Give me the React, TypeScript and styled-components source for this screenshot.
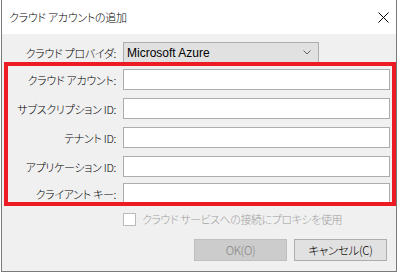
import React from "react";
import styled, { createGlobalStyle } from "styled-components";

const Global = createGlobalStyle`
  html, body { margin: 0; padding: 0; background: #ffffff; }
  body {
    font-family: "Noto Sans CJK JP", "Noto Sans", sans-serif;
    font-size: 11px;
    font-weight: 300;
    font-feature-settings: "palt";
    letter-spacing: -0.3px;
    color: #000;
  }
`;

const Win = styled.div`
  position: relative;
  margin-left: 1px;
  width: 396px;
  height: 272px;
  box-sizing: border-box;
  border: 1px solid #7a7a7a;
  border-top: none;
  background: #f0f0f0;
  display: flex;
  flex-direction: column;
  overflow: hidden;
`;

const TitleBar = styled.div`
  height: 34px;
  background: #ffffff;
  display: flex;
  align-items: center;
  justify-content: space-between;
  padding: 0 7px 0 7px;
  flex-shrink: 0;
`;

const Title = styled.span`
  font-size: 11px;
  line-height: 16px;
`;

const CloseBtn = styled.div`
  width: 12px;
  height: 12px;
  display: flex;
  align-items: center;
  justify-content: center;
`;

const Content = styled.div`
  display: flex;
  flex-direction: column;
  padding: 8px 0 0 0;
`;

const Row = styled.div<{ $mt?: number }>`
  display: grid;
  grid-template-columns: 114px 1fr;
  column-gap: 7px;
  align-items: center;
  margin-top: ${(p) => p.$mt ?? 0}px;
  padding-right: 6px;
`;

const Label = styled.label`
  text-align: right;
  white-space: nowrap;
  font-size: 11px;
  line-height: 16px;
`;

const Select = styled.div`
  width: 196px;
  height: 21px;
  box-sizing: border-box;
  border: 1px solid #adadad;
  background: #e1e1e1;
  display: flex;
  align-items: center;
  justify-content: space-between;
  padding: 0 7px 0 3px;
  font-family: "Liberation Sans", Arial, sans-serif;
  font-weight: 400;
  letter-spacing: 0;
  font-size: 12px;
`;

const Group = styled.div`
  position: relative;
  display: flex;
  flex-direction: column;
  padding-top: 6px;
`;

const Highlight = styled.div`
  position: absolute;
  left: 2px;
  right: 0px;
  top: -1px;
  height: 144px;
  border: 4px solid #ed1c24;
  box-sizing: border-box;
  pointer-events: none;
`;

const Input = styled.div`
  height: 21px;
  box-sizing: border-box;
  border: 1px solid #adadad;
  background: #ffffff;
`;

const CheckRow = styled.div`
  display: flex;
  align-items: center;
  gap: 6px;
  margin: 8px 0 0 121px;
  color: #a0a0a0;
  font-size: 11px;
  letter-spacing: -0.45px;
  line-height: 14px;
`;

const Check = styled.div`
  width: 13px;
  height: 13px;
  box-sizing: border-box;
  border: 1px solid #bcbcbc;
  background: #ffffff;
`;

const Buttons = styled.div`
  display: flex;
  justify-content: flex-end;
  gap: 7px;
  margin-top: 13px;
  padding-right: 9px;
`;

const Button = styled.div<{ $disabled?: boolean }>`
  width: 93px;
  height: 22px;
  box-sizing: border-box;
  border: 1px solid ${(p) => (p.$disabled ? "#bfbfbf" : "#adadad")};
  background: ${(p) => (p.$disabled ? "#cccccc" : "#e1e1e1")};
  color: ${(p) => (p.$disabled ? "#838383" : "#000")};
  display: flex;
  align-items: center;
  justify-content: center;
  font-size: 11.5px;
`;

const fields: { label: string; mt: number }[] = [
  { label: "クラウド アカウント:", mt: 0 },
  { label: "サブスクリプション ID:", mt: 8 },
  { label: "テナント ID:", mt: 8 },
  { label: "アプリケーション ID:", mt: 8 },
  { label: "クライアント キー:", mt: 6 },
];

export default function App() {
  return (
    <>
      <Global />
      <Win>
        <TitleBar>
          <Title>クラウド アカウントの追加</Title>
          <CloseBtn>
            <svg width="11" height="11" viewBox="0 0 11 11">
              <path d="M0.5 0.5 L10.5 10.5 M10.5 0.5 L0.5 10.5" stroke="#000" strokeWidth="1" fill="none" />
            </svg>
          </CloseBtn>
        </TitleBar>
        <Content>
          <Row>
            <Label>クラウド プロバイダ:</Label>
            <Select>
              <span>Microsoft Azure</span>
              <svg width="8" height="5" viewBox="0 0 8 5">
                <path d="M0.5 0.5 L4 4 L7.5 0.5" stroke="#606060" strokeWidth="1" fill="none" />
              </svg>
            </Select>
          </Row>
          <Group>
            {fields.map((f) => (
              <Row key={f.label} $mt={f.mt}>
                <Label>{f.label}</Label>
                <Input />
              </Row>
            ))}
            <Highlight />
          </Group>
          <CheckRow>
            <Check />
            <span>クラウド サービスへの接続にプロキシを使用</span>
          </CheckRow>
          <Buttons>
            <Button $disabled>OK(O)</Button>
            <Button>キャンセル(C)</Button>
          </Buttons>
        </Content>
      </Win>
    </>
  );
}
